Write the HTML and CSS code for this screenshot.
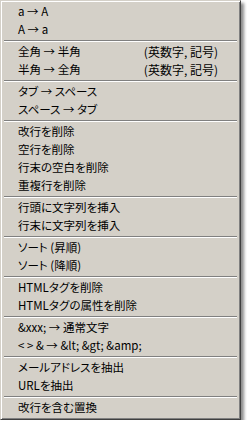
FILE: index.html
```html
<!DOCTYPE html>
<html lang="ja">

<head>
    <meta charset="UTF-8">
    <title>変換メニュー</title>
    <link rel="stylesheet" href="styles.css">
</head>

<body>
    <div class="menu">
        <div class="item">a → A</div>
        <div class="item">A → a</div>
        <div class="sep"></div>
        <div class="item"><span>全角 → 半角</span><span class="note">(英数字, 記号)</span></div>
        <div class="item"><span>半角 → 全角</span><span class="note">(英数字, 記号)</span></div>
        <div class="sep"></div>
        <div class="item">タブ → スペース</div>
        <div class="item">スペース → タブ</div>
        <div class="sep"></div>
        <div class="item">改行を削除</div>
        <div class="item">空行を削除</div>
        <div class="item">行末の空白を削除</div>
        <div class="item">重複行を削除</div>
        <div class="sep"></div>
        <div class="item">行頭に文字列を挿入</div>
        <div class="item">行末に文字列を挿入</div>
        <div class="sep"></div>
        <div class="item">ソート (昇順)</div>
        <div class="item">ソート (降順)</div>
        <div class="sep"></div>
        <div class="item">HTMLタグを削除</div>
        <div class="item">HTMLタグの属性を削除</div>
        <div class="sep"></div>
        <div class="item">&amp;xxx; → 通常文字</div>
        <div class="item">&lt; &gt; &amp; → &amp;lt; &amp;gt; &amp;amp;</div>
        <div class="sep"></div>
        <div class="item">メールアドレスを抽出</div>
        <div class="item">URLを抽出</div>
        <div class="sep"></div>
        <div class="item">改行を含む置換</div>
    </div>
</body>

</html>
```

FILE: styles.css
```css
body {
    margin: 0;
    background: #ffffff;
    font-family: "Noto Sans CJK JP", "Liberation Sans", sans-serif;
    font-size: 11.5px;
    font-feature-settings: "palt";
    color: #000000;
}

.menu {
    width: 241px;
    box-sizing: border-box;
    background: #d4d0c8;
    border-top: 1px solid #d4d0c8;
    border-left: 1px solid #d4d0c8;
    border-right: 1px solid #404040;
    border-bottom: 1px solid #404040;
    box-shadow: inset 1px 1px #ffffff, inset -1px -1px #808080, 3px 3px 3px rgba(0, 0, 0, 0.45);
    padding: 2px;
}

.item {
    display: flex;
    justify-content: space-between;
    height: 18px;
    line-height: 17px;
    padding: 0 20px 0 15px;
    white-space: nowrap;
}

.note {
    font-size: 12px;
}

.sep {
    display: flex;
    align-items: center;
    height: 4px;
    padding: 0 1px;
}

.sep::before {
    content: "";
    flex: 1;
    border-top: 1px solid #808080;
    border-bottom: 1px solid #ffffff;
}
```
